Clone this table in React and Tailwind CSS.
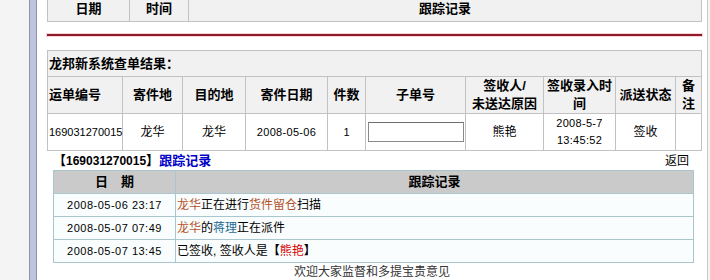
import React from "react";

const cjk = { fontFamily: '"Liberation Sans", "Noto Sans CJK SC", sans-serif' };

function Th({ children, className = "" }) {
  return (
    <div
      className={
        "flex items-center justify-center text-center border-r border-b border-[#c2c2c2] bg-[#f1f1f1] font-bold text-[13px] leading-[18px] text-black " +
        className
      }
    >
      {children}
    </div>
  );
}

function Td({ children, className = "" }) {
  return (
    <div
      className={
        "flex items-center justify-center text-center border-r border-b border-[#c2c2c2] bg-white leading-[17px] text-black " +
        className
      }
    >
      {children}
    </div>
  );
}

const tracks = [
  {
    time: "2008-05-06 23:17",
    text: (
      <>
        <span className="text-[#b4532a]">龙华</span>正在进行
        <span className="text-[#b4532a]">货件留仓</span>扫描
      </>
    ),
  },
  {
    time: "2008-05-07 07:49",
    text: (
      <>
        <span className="text-[#b4532a]">龙华</span>的
        <span className="text-[#1d6a93]">蒋理</span>正在派件
      </>
    ),
  },
  {
    time: "2008-05-07 13:45",
    text: (
      <>
        已签收, 签收人是<span className="font-bold">【</span>
        <span className="text-[#d40000]">熊艳</span>
        <span className="font-bold">】</span>
      </>
    ),
  },
];

export default function App() {
  return (
    <div className="w-[710px] h-[280px] overflow-hidden flex bg-[#f4f4f4]" style={cjk}>
      {/* left frame */}
      <div className="w-[29px] shrink-0 bg-[#f4f4f4]" />
      <div className="w-[8px] shrink-0 border-l border-r border-[#8f93a8] bg-[#bec3e0]" />

      {/* content */}
      <div className="w-[671px] shrink-0 bg-white border-r border-[#c9c9c9] pl-[10px]">
        {/* top header (cut off) */}
        <div className="grid grid-cols-[82px_59px_513px] border-l border-[#c2c2c2] w-[655px]">
          <div className="h-[22px] border-r border-b border-[#c2c2c2] bg-[#f1f1f1] text-center font-bold text-[13px] leading-[18px]">日期</div>
          <div className="h-[22px] border-r border-b border-[#c2c2c2] bg-[#f1f1f1] text-center font-bold text-[13px] leading-[18px]">时间</div>
          <div className="h-[22px] border-r border-b border-[#c2c2c2] bg-[#f1f1f1] text-center font-bold text-[13px] leading-[18px]">跟踪记录</div>
        </div>

        {/* red rule */}
        <div className="mt-[12px] w-[655px] h-[2px] bg-[#8e1b27] shadow-[0_0_0_1px_#f6d3d6]" />

        {/* results table */}
        <div className="mt-[14px] w-[655px] grid grid-cols-[75px_60px_63px_82px_38px_100px_78px_72px_60px_26px] border-l border-t border-[#c2c2c2]">
          <div className="col-span-10 h-[26px] border-r border-b border-[#c2c2c2] bg-[#f1f1f1] flex items-center pl-[1px] font-bold text-[13px]">
            龙邦新系统查单结果：
          </div>

          <Th className="h-[37px] justify-start pl-[1px]">运单编号</Th>
          <Th className="h-[37px]">寄件地</Th>
          <Th className="h-[37px]">目的地</Th>
          <Th className="h-[37px]">寄件日期</Th>
          <Th className="h-[37px]">件数</Th>
          <Th className="h-[37px]">子单号</Th>
          <Th className="h-[37px]">签收人/<br />未送达原因</Th>
          <Th className="h-[37px] px-[2px]">签收录入时间</Th>
          <Th className="h-[37px]">派送状态</Th>
          <Th className="h-[37px] px-[3px]">备注</Th>

          <Td className="h-[37px] justify-start pl-[1px] text-[11px] whitespace-nowrap">169031270015</Td>
          <Td className="h-[37px] text-[12px]">龙华</Td>
          <Td className="h-[37px] text-[12px]">龙华</Td>
          <Td className="h-[37px] text-[11px] tracking-[0.3px]">2008-05-06</Td>
          <Td className="h-[37px] text-[11px]">1</Td>
          <Td className="h-[37px] text-[12px]">
            <input
              type="text"
              className="w-[96px] h-[20px] border border-[#8a8a8a] border-t-[#6e6e6e] bg-white outline-none"
            />
          </Td>
          <Td className="h-[37px] text-[12px]">熊艳</Td>
          <Td className="h-[37px] flex-col text-[11px] tracking-[0.3px]">
            <span>2008-5-7</span>
            <span>13:45:52</span>
          </Td>
          <Td className="h-[37px] text-[12px]">签收</Td>
          <Td className="h-[37px] text-[12px]" />
        </div>

        {/* tracking section */}
        <div className="ml-[6px] w-[641px]">
          <div className="h-[19px] flex items-center justify-between">
            <div className="font-bold text-[13px] leading-[16px]">
              <span>【</span>
              <span className="text-[12px]">169031270015</span>
              <span>】</span>
              <span className="text-[#0000c8]">跟踪记录</span>
            </div>
            <span className="text-[12px] pr-[5px]">返回</span>
          </div>

          <div className="grid grid-cols-[122px_518px] border-l border-t border-[#a9c6cf]">
            <div className="h-[23px] border-r border-b border-[#a9c6cf] bg-[#cacaca] flex items-center justify-center font-bold text-[13px]">
              日　期
            </div>
            <div className="h-[23px] border-r border-b border-[#a9c6cf] bg-[#cacaca] flex items-center justify-center font-bold text-[13px]">
              跟踪记录
            </div>
            {tracks.map((t) => (
              <React.Fragment key={t.time}>
                <div className="h-[23px] border-r border-b border-[#a9c6cf] bg-[#fafdfd] flex items-center justify-center text-[11px] tracking-[0.5px]">
                  {t.time}
                </div>
                <div className="h-[23px] border-r border-b border-[#a9c6cf] bg-[#fafdfd] flex items-center pl-[1px] text-[12px]">
                  {t.text}
                </div>
              </React.Fragment>
            ))}
          </div>
        </div>

        <div className="pr-[10px] mt-[1px] text-center text-[12px] leading-[16px] text-[#333]">
          欢迎大家监督和多提宝贵意见
        </div>
      </div>
    </div>
  );
}
